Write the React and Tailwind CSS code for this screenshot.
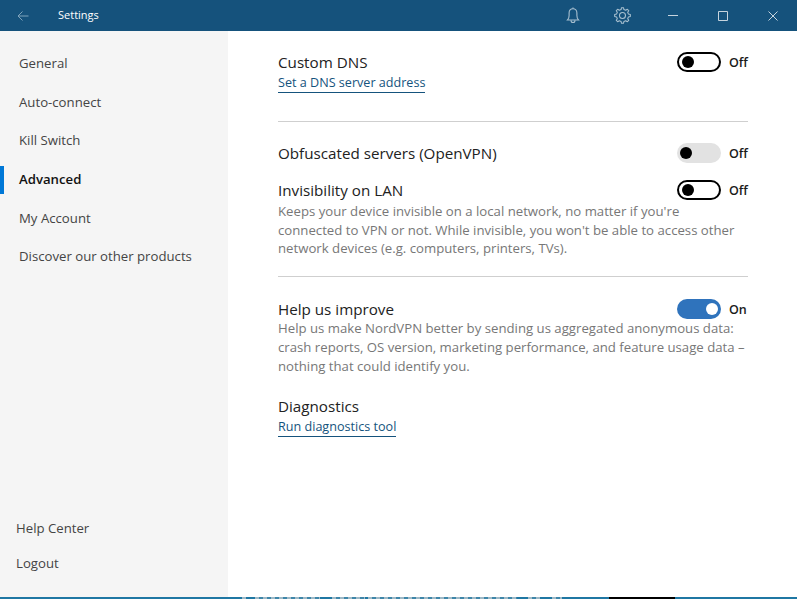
const font = { fontFamily: '"Open Sans", "Noto Sans", sans-serif' };

const gearPath = (() => {
  const pts = [];
  const n = 8;
  for (let i = 0; i < n; i++) {
    const a = (i * 2 * Math.PI) / n;
    const step = (2 * Math.PI) / n;
    [[-0.3, 6.1], [-0.16, 7.9], [0.16, 7.9], [0.3, 6.1]].forEach(([f, r]) => {
      const t = a + f * step;
      pts.push(`${(8.5 + r * Math.cos(t)).toFixed(2)} ${(8.5 + r * Math.sin(t)).toFixed(2)}`);
    });
  }
  return `M${pts.join('L')}Z`;
})();

const strip = [
  [242, 'teal'], [4, 'text'], [9, 'teal'], [65, 'text'], [12, 'teal'], [33, 'text'], [3, 'teal'], [149, 'text'],
  [11, 'teal'], [12, 'text'], [12, 'teal'], [10, 'text'], [47, 'teal'], [66, 'black'], [122, 'teal'],
];
const stripClass = {
  teal: 'bg-[#1f77a3]',
  black: 'bg-black',
  text: 'bg-[repeating-linear-gradient(90deg,#9fb9c6_0,#9fb9c6_4px,#3f86a9_4px,#3f86a9_8px)]',
};

function Toggle({ state = 'off', label = 'Off' }) {
  const track =
    state === 'on'
      ? 'bg-[#2f73bc] justify-end'
      : state === 'disabled'
      ? 'bg-[#e2e2e2] justify-start'
      : 'bg-white border-2 border-black justify-start';
  return (
    <div className="flex items-center gap-2">
      <div className={`w-11 h-5 rounded-full flex items-center px-[3px] ${track}`}>
        <div className={`w-3 h-3 rounded-full ${state === 'on' ? 'bg-white' : 'bg-black'}`} />
      </div>
      <span className="text-[12.5px] leading-[21px] h-5 text-[#1a1a1a] w-[19px] whitespace-nowrap font-semibold">{label}</span>
    </div>
  );
}

function NavItem({ label, active }) {
  return (
    <div className={`h-[38.7px] flex items-center pl-[19px] relative text-[13.2px] ${active ? 'font-semibold text-[#111]' : 'text-[#444]'}`}>
      {active && <div className="absolute left-0 top-[5px] w-1 h-[28px] bg-[#0078d7]" />}
      {label}
    </div>
  );
}

function Row({ title, children }) {
  return (
    <div className="flex items-center justify-between h-5">
      <span className="text-[15.2px] leading-5 text-[#222]">{title}</span>
      {children}
    </div>
  );
}

function Desc({ children, className = '' }) {
  return <p className={`text-[13.2px] leading-[18.7px] text-[#777] whitespace-nowrap ${className}`}>{children}</p>;
}

function LinkText({ children }) {
  return (
    <span className="self-start text-[12.6px] leading-[19px] text-[#15537d] border-b border-[#15537d] whitespace-nowrap">
      {children}
    </span>
  );
}

function HeaderCell({ children }) {
  return <div className="w-[50px] h-[31px] flex items-center justify-center">{children}</div>;
}

export default function App() {
  return (
    <div className="w-[797px] h-[599px] flex flex-col overflow-hidden bg-white" style={font}>
      <header className="h-[31px] shrink-0 bg-[#15527c] flex items-center text-white">
        <svg className="ml-[17px]" width="12" height="12" viewBox="0 0 12 12" fill="none" stroke="#7fa3bb" strokeWidth="1">
          <path d="M11.5 6H1M5.5 1.5 1 6l4.5 4.5" />
        </svg>
        <span className="ml-[29px] text-[11px]">Settings</span>
        <div className="ml-auto flex items-center">
          <HeaderCell>
            <svg className="ml-[1px]" width="14" height="17" viewBox="0 0 14 17" fill="none" stroke="#a8c0d0" strokeWidth="1.1">
              <path d="M1.5 13c1.200-1.200 1.600-2.400 1.600-4.500V6C3.100 3.500 4.800 1.700 7 1.700S10.900 3.500 10.900 6v2.500c0 2.100.4 3.300 1.600 4.500H1.500Z" />
              <path d="M5 13.200c0 1.300.9 2.300 2 2.300s2-1 2-2.300M7 1.700V.5" />
            </svg>
          </HeaderCell>
          <HeaderCell>
            <svg className="ml-[1px]" width="17" height="17" viewBox="0 0 17 17" fill="none" stroke="#a8c0d0" strokeWidth="1.050">
              <path d={gearPath} strokeLinejoin="round" />
              <circle cx="8.5" cy="8.500" r="3" />
            </svg>
          </HeaderCell>
          <HeaderCell><svg className="ml-[1px]" width="10" height="11" viewBox="0 0 10 11" fill="none" stroke="#c6d4de" strokeWidth="1"><path d="M0 5.500h10" /></svg></HeaderCell>
          <HeaderCell><svg className="ml-[1px]" width="10" height="10" viewBox="0 0 10 10" fill="none" stroke="#c6d4de" strokeWidth="1"><path d="M.5.500h9v9h-9z" /></svg></HeaderCell>
          <HeaderCell><svg className="ml-[1px]" width="10" height="10" viewBox="0 0 10 10" fill="none" stroke="#c6d4de" strokeWidth="1"><path d="M.5.500l9 9M9.500.500l-9 9" /></svg></HeaderCell>
        </div>
      </header>

      <div className="flex flex-1 min-h-0">
        <aside className="w-[228px] shrink-0 bg-[#f5f5f5] flex flex-col justify-between pt-[13.5px] pb-[24px]">
          <nav>
            <NavItem label="General" />
            <NavItem label="Auto-connect" />
            <NavItem label="Kill Switch" />
            <NavItem label="Advanced" active />
            <NavItem label="My Account" />
            <NavItem label="Discover our other products" />
          </nav>
          <div className="flex flex-col gap-[15px] pl-4 text-[13.2px] leading-5 text-[#444]">
            <span>Help Center</span>
            <span>Logout</span>
          </div>
        </aside>

        <main className="flex-1 pl-[50px] pr-[49px] pt-[21px]">
          <Row title="Custom DNS"><Toggle /></Row>
          <div className="flex mt-[1px]"><LinkText>Set a DNS server address</LinkText></div>
          <div className="h-px bg-[#cfcfcf] mt-[28px]" />
          <div className="mt-[21px]"><Row title="Obfuscated servers (OpenVPN)"><Toggle state="disabled" /></Row></div>
          <div className="mt-[17px]"><Row title="Invisibility on LAN"><Toggle /></Row></div>
          <Desc className="mt-[2px]">
            Keeps your device invisible on a local network, no matter if you're<br />
            connected to VPN or not. While invisible, you won't be able to access other<br />
            network devices (e.g. computers, printers, TVs).
          </Desc>
          <div className="h-px bg-[#cfcfcf] mt-[18px]" />
          <div className="mt-[22px]"><Row title="Help us improve"><Toggle state="on" label="On" /></Row></div>
          <Desc>
            Help us make NordVPN better by sending us aggregated anonymous data:<br />
            crash reports, OS version, marketing performance, and feature usage data –<br />
            nothing that could identify you.
          </Desc>
          <div className="mt-[21px]"><Row title="Diagnostics" /></div>
          <div className="flex mt-[1px]"><LinkText>Run diagnostics tool</LinkText></div>
        </main>
      </div>

      <div className="h-[2px] shrink-0 flex">
        {strip.map(([w, kind], i) => (
          <div key={i} className={stripClass[kind]} style={{ width: w }} />
        ))}
      </div>
    </div>
  );
}
